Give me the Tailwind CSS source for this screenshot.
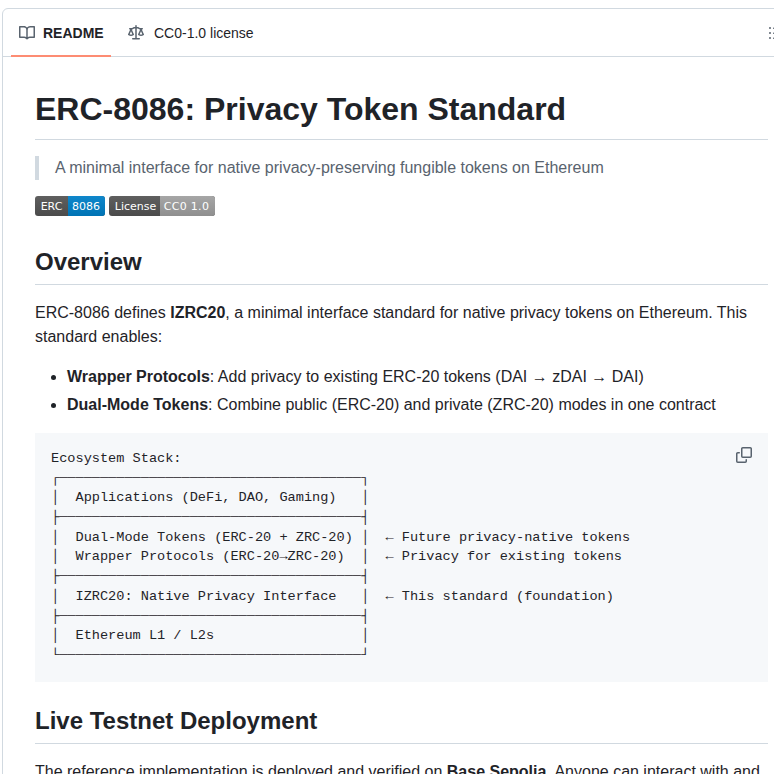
<!DOCTYPE html>
<html lang="en">
<head>
    <meta charset="UTF-8">
    <title>ERC-8086: Privacy Token Standard</title>
    <script src="https://cdn.jsdelivr.net/npm/@tailwindcss/browser@4"></script>
</head>
<body class="h-[774px] overflow-hidden bg-white font-['Liberation_Sans',sans-serif] text-[#1f2328]">

    <div class="mt-2 ml-[2px] w-[799px] rounded-md border border-[#d1d9e0]">

        <!-- tabs -->
        <nav class="flex h-[48px] items-center justify-between border-b border-[#d1d9e0] pl-2 pr-[16px]">
            <div class="flex items-center">
                <a href="#" class="relative flex h-[47px] w-[100px] items-center gap-2 pl-2 text-sm font-semibold">
                    <svg class="fill-[#59636e]" width="16" height="16" viewBox="0 0 16 16"><path d="M0 1.75A.75.75 0 0 1 .75 1h4.253c1.227 0 2.317.59 3 1.501A3.743 3.743 0 0 1 11.006 1h4.245a.75.75 0 0 1 .75.75v10.5a.75.75 0 0 1-.75.75h-4.507a2.25 2.25 0 0 0-1.591.659l-.622.621a.75.75 0 0 1-1.06 0l-.622-.621A2.25 2.25 0 0 0 5.258 13H.75a.75.75 0 0 1-.75-.75Zm7.251 10.324.004-5.073-.002-2.253A2.25 2.25 0 0 0 5.003 2.5H1.5v9h3.757a3.75 3.75 0 0 1 1.994.574ZM8.755 4.75l-.004 7.322a3.752 3.752 0 0 1 1.992-.572H14.5v-9h-3.495a2.25 2.25 0 0 0-2.25 2.25Z"/></svg>
                    README
                    <span class="absolute right-0 bottom-[-1px] left-0 h-[2px] bg-[#fd8c73]"></span>
                </a>
                <a href="#" class="ml-[17px] flex items-center gap-[10px] text-sm">
                    <svg class="fill-[#59636e]" width="16" height="16" viewBox="0 0 16 16"><path d="M8.75.75V2h.985c.304 0 .603.08.867.231l1.29.736c.038.022.08.033.124.033h2.234a.75.75 0 0 1 0 1.5h-.427l2.111 4.692a.75.75 0 0 1-.154.838l-.53-.53.529.531-.001.002-.002.002-.006.006-.006.005-.01.01-.045.04c-.21.176-.441.327-.686.45C14.556 10.78 13.88 11 13 11a4.498 4.498 0 0 1-2.023-.454 3.544 3.544 0 0 1-.686-.45l-.045-.04-.016-.015-.006-.006-.004-.004v-.001a.75.75 0 0 1-.154-.838L12.178 4.5h-.162c-.305 0-.604-.079-.868-.231l-1.29-.736a.245.245 0 0 0-.124-.033H8.75V13h2.5a.75.75 0 0 1 0 1.5h-6.5a.75.75 0 0 1 0-1.5h2.5V3.5h-.984a.245.245 0 0 0-.124.033l-1.289.737c-.265.15-.564.23-.869.23h-.162l2.112 4.692a.75.75 0 0 1-.154.838l-.53-.53.529.531-.001.002-.002.002-.006.006-.016.015-.045.04c-.21.176-.441.327-.686.45C4.556 10.78 3.88 11 3 11a4.498 4.498 0 0 1-2.023-.454 3.544 3.544 0 0 1-.686-.45l-.045-.04-.016-.015-.006-.006-.004-.004v-.001a.75.75 0 0 1-.154-.838L2.178 4.5H1.75a.75.75 0 0 1 0-1.5h2.234a.249.249 0 0 0 .125-.033l1.288-.737c.265-.15.564-.23.869-.23h.984V.75a.75.75 0 0 1 1.5 0Zm2.945 8.477c.285.135.718.273 1.305.273s1.02-.138 1.305-.273L13 6.327Zm-10 0c.285.135.718.273 1.305.273s1.02-.138 1.305-.273L3 6.327Z"/></svg>
                    CC0-1.0 license
                </a>
            </div>
            <svg class="fill-[#59636e]" width="16" height="16" viewBox="0 0 16 16"><path d="M5.75 2.5h8.5a.75.75 0 0 1 0 1.5h-8.5a.75.75 0 0 1 0-1.5Zm0 5h8.5a.75.75 0 0 1 0 1.5h-8.5a.75.75 0 0 1 0-1.5Zm0 5h8.5a.75.75 0 0 1 0 1.5h-8.5a.75.75 0 0 1 0-1.5ZM2 14a1 1 0 1 1 0-2 1 1 0 0 1 0 2Zm1-6a1 1 0 1 1-2 0 1 1 0 0 1 2 0ZM2 4a1 1 0 1 1 0-2 1 1 0 0 1 0 2Z"/></svg>
        </nav>

        <!-- readme -->
        <article class="p-8 text-base leading-6">
            <h1 class="mb-4 border-b border-[#d1d9e0] pb-[9.6px] text-[32px] leading-10 font-semibold">ERC-8086: Privacy Token Standard</h1>

            <blockquote class="mb-4 border-l-4 border-[#d1d9e0] pl-4 text-[#59636e]">A minimal interface for native privacy-preserving fungible tokens on Ethereum</blockquote>

            <p class="flex h-[27px] items-start gap-1 font-['DejaVu_Sans',sans-serif] text-[11px] leading-[21px] text-white">
                <span class="flex h-5 overflow-hidden rounded-[3px] bg-linear-to-b from-[#5f5f5f] to-[#4b4b4b]">
                    <span class="w-[33px] text-center">ERC</span>
                    <span class="w-[37px] bg-linear-to-b from-[#0f87cb] to-[#0073b4] pr-px text-center">8086</span>
                </span>
                <span class="flex h-5 overflow-hidden rounded-[3px] bg-linear-to-b from-[#5f5f5f] to-[#4b4b4b]">
                    <span class="w-[51px] pl-[2px] text-center">License</span>
                    <span class="w-[55px] bg-linear-to-b from-[#a6a6a6] to-[#8f8f8f] pr-[2px] text-center tracking-[0.3px]">CC0 1.0</span>
                </span>
            </p>

            <h2 class="mt-6 mb-4 border-b border-[#d1d9e0] pb-[7.2px] text-2xl leading-[30px] font-semibold">Overview</h2>

            <p class="mb-4">ERC-8086 defines <strong>IZRC20</strong>, a minimal interface standard for native privacy tokens on Ethereum. This standard enables:</p>

            <ul class="mb-4 list-disc pl-8">
                <li><strong>Wrapper Protocols</strong>: Add privacy to existing ERC-20 tokens (DAI → zDAI → DAI)</li>
                <li class="mt-1"><strong>Dual-Mode Tokens</strong>: Combine public (ERC-20) and private (ZRC-20) modes in one contract</li>
            </ul>

            <div class="relative mb-6 bg-[#f6f8fa] p-4">
                <pre class="font-['Liberation_Mono',monospace] text-[13.6px] leading-[19.72px]">Ecosystem Stack:
┌─────────────────────────────────────┐
│  Applications (DeFi, DAO, Gaming)   │
├─────────────────────────────────────┤
│  Dual-Mode Tokens (ERC-20 + ZRC-20) │  ← Future privacy-native tokens
│  Wrapper Protocols (ERC-20→ZRC-20)  │  ← Privacy for existing tokens
├─────────────────────────────────────┤
│  IZRC20: Native Privacy Interface   │  ← This standard (foundation)
├─────────────────────────────────────┤
│  Ethereum L1 / L2s                  │
└─────────────────────────────────────┘</pre>
                <svg class="absolute top-[14px] right-4 fill-[#59636e]" width="16" height="16" viewBox="0 0 16 16"><path d="M0 6.75C0 5.784.784 5 1.75 5h1.5a.75.75 0 0 1 0 1.5h-1.5a.25.25 0 0 0-.25.25v7.5c0 .138.112.25.25.25h7.5a.25.25 0 0 0 .25-.25v-1.5a.75.75 0 0 1 1.5 0v1.5A1.75 1.75 0 0 1 9.25 16h-7.5A1.75 1.75 0 0 1 0 14.25Z"/><path d="M5 1.75C5 .784 5.784 0 6.75 0h7.5C15.216 0 16 .784 16 1.75v7.5A1.75 1.75 0 0 1 14.25 11h-7.5A1.75 1.75 0 0 1 5 9.25Zm1.75-.25a.25.25 0 0 0-.25.25v7.5c0 .138.112.25.25.25h7.5a.25.25 0 0 0 .25-.25v-7.5a.25.25 0 0 0-.25-.25Z"/></svg>
            </div>

            <h2 class="mt-6 mb-4 border-b border-[#d1d9e0] pb-[7.2px] text-2xl leading-[30px] font-semibold">Live Testnet Deployment</h2>

            <p class="mb-4">The reference implementation is deployed and verified on <strong>Base Sepolia</strong>. Anyone can interact with and test the contracts directly on the public testnet.</p>
        </article>
    </div>

</body>
</html>
